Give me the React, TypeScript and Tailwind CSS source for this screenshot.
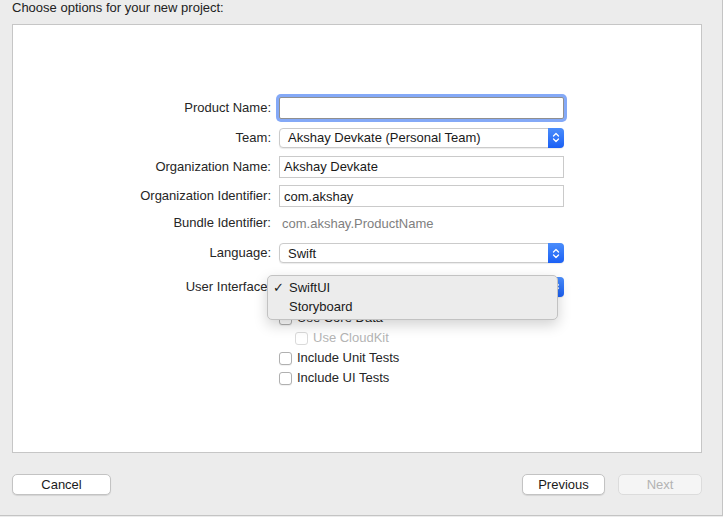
import React from "react";

function Stepper() {
  return (
    <span className="flex h-[calc(100%+2px)] -my-px -mr-px w-[16px] shrink-0 items-center justify-center rounded-r-[4px] bg-gradient-to-b from-[#4b8dfb] to-[#1a5ff5]">
      <svg width="8" height="13" viewBox="0 0 8 13" fill="none" stroke="white" strokeWidth="1.3" strokeLinecap="round" strokeLinejoin="round">
        <path d="M1.5 5 4 2.5 6.5 5" />
        <path d="M1.5 8 4 10.5 6.5 8" />
      </svg>
    </span>
  );
}

function PopUp({ value }: { value: string }) {
  return (
    <div className="flex h-[20px] w-full items-center rounded-[4px] border border-[#cbcbcb] bg-white shadow-[0_1px_1px_rgba(0,0,0,0.08)]">
      <span className="flex-1 pl-[8px] text-[13px] leading-none text-[#1a1a1a]">{value}</span>
      <Stepper />
    </div>
  );
}

function TextField({ value, focused }: { value?: string; focused?: boolean }) {
  return (
    <div
      className={
        focused
          ? "flex h-[22px] w-full items-center rounded-[2px] border border-[#8f8f8f] bg-white ring-[3px] ring-[#84a9f7]"
          : "flex h-[22px] w-full items-center border border-[#cacaca] bg-white"
      }
    >
      <span className="pl-[4px] text-[13px] leading-none text-[#1a1a1a]">{value}</span>
    </div>
  );
}

function Row({ label, h, children }: { label: string; h: string; children: React.ReactNode }) {
  return (
    <div className={`flex items-center ${h}`}>
      <div className="w-[258px] text-right text-[13px] text-[#262626]">{label}</div>
      <div className="relative ml-[8px] w-[285px]">{children}</div>
    </div>
  );
}

function Check({ label, disabled, indent }: { label: string; disabled?: boolean; indent?: boolean }) {
  return (
    <div className={indent ? "flex h-[20px] items-center pl-[16px]" : "flex h-[20px] items-center"}>
      <span
        className={
          disabled
            ? "h-[13px] w-[13px] rounded-[3px] border border-[#dadada] bg-white"
            : "h-[13px] w-[13px] rounded-[3px] border border-[#b0b0b0] bg-white shadow-[0_1px_1px_rgba(0,0,0,0.06)]"
        }
      />
      <span className={disabled ? "ml-[5px] text-[13px] text-[#b4b4b4]" : "ml-[5px] text-[13px] text-[#262626]"}>{label}</span>
    </div>
  );
}

export default function App() {
  return (
    <div className="h-[517px] w-[723px] bg-[#ececec]" style={{ fontFamily: '"Liberation Sans", Arial, sans-serif' }}>
      <div className="flex h-[516px] w-[723px] flex-col border-r border-b border-[#c4c4c4]">
        <div className="h-[24px] pl-[12px] text-[13px] leading-[16px] text-[#222]">Choose options for your new project:</div>

        <div className="ml-[12px] flex h-[429px] w-[690px] flex-col border border-[#c6c6c6] bg-white pt-[68px]">
          <Row label="Product Name:" h="h-[30px]">
            <TextField focused />
          </Row>
          <Row label="Team:" h="h-[29px]">
            <PopUp value="Akshay Devkate (Personal Team)" />
          </Row>
          <Row label="Organization Name:" h="h-[29px]">
            <TextField value="Akshay Devkate" />
          </Row>
          <Row label="Organization Identifier:" h="h-[30px]">
            <TextField value="com.akshay" />
          </Row>
          <Row label="Bundle Identifier:" h="h-[24px]">
            <span className="pl-[3px] text-[13px] text-[#808080]">com.akshay.ProductName</span>
          </Row>
          <Row label="Language:" h="h-[36px]">
            <PopUp value="Swift" />
          </Row>
          <Row label="User Interface:" h="h-[31px]">
            <PopUp value="SwiftUI" />
            <div className="absolute -left-[12px] -top-[2px] z-10 flex h-[45px] w-[291px] flex-col rounded-[5px] border border-[#c2c2c2] bg-[#ececec] pt-[3px] shadow-[0_5px_14px_rgba(0,0,0,0.18)]">
              <div className="flex h-[19px] items-center text-[13px] text-[#1a1a1a]">
                <span className="w-[21px] pl-[5px] text-[13px]">✓</span>
                <span>SwiftUI</span>
              </div>
              <div className="flex h-[19px] items-center text-[13px] text-[#1a1a1a]">
                <span className="w-[21px]" />
                <span>Storyboard</span>
              </div>
            </div>
          </Row>
          <div className="ml-[266px] mt-[6px] flex flex-col">
            <Check label="Use Core Data" />
            <Check label="Use CloudKit" disabled indent />
            <Check label="Include Unit Tests" />
            <Check label="Include UI Tests" />
          </div>
        </div>

        <div className="mt-[21px] flex h-[21px] items-center pl-[12px] pr-[20px]">
          <button className="h-[21px] w-[99px] rounded-[5px] border border-[#c3c3c3] bg-white text-[13px] text-[#1a1a1a] shadow-[0_1px_1px_rgba(0,0,0,0.1)]">
            Cancel
          </button>
          <div className="flex-1" />
          <button className="h-[21px] w-[83px] rounded-[5px] border border-[#c3c3c3] bg-white text-[13px] text-[#1a1a1a] shadow-[0_1px_1px_rgba(0,0,0,0.1)]">
            Previous
          </button>
          <button className="ml-[13px] h-[21px] w-[84px] rounded-[5px] border border-[#dcdcdc] bg-[#f5f5f5] text-[13px] text-[#b3b3b3]">
            Next
          </button>
        </div>
      </div>
    </div>
  );
}
